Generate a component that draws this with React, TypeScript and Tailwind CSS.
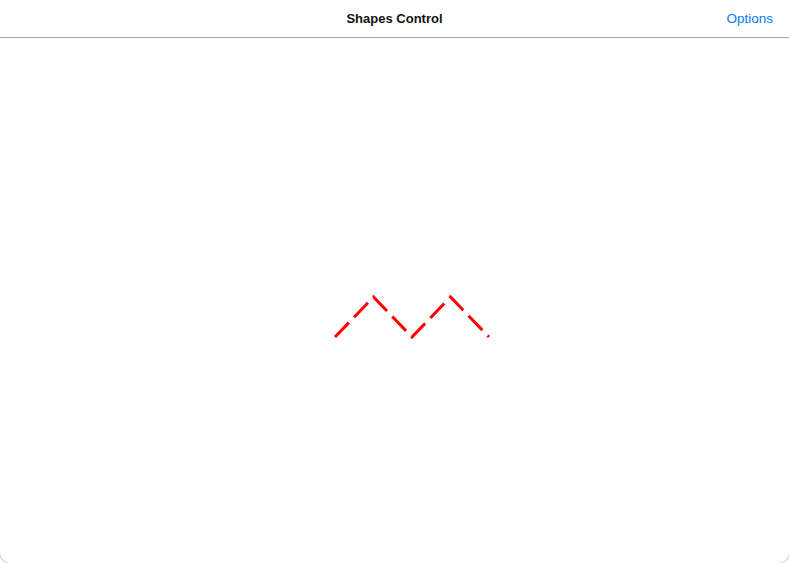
import React from "react";

export default function App() {
  return (
    <div className="w-[789px] h-[563px] overflow-hidden bg-white" style={{ fontFamily: '"Liberation Sans", Arial, sans-serif' }}>
      <div className="-ml-px w-[791px] h-[564px] flex flex-col border border-t-0 border-[#cfcfcf] rounded-b-[12px] bg-white overflow-hidden">
        <div className="relative h-[38px] shrink-0 flex items-center justify-center border-b border-[#a8a8a8] bg-white">
          <span className="text-[13px] font-bold text-[#111] leading-none">Shapes Control</span>
          <span className="absolute right-[16px] top-1/2 -translate-y-1/2 text-[13.5px] text-[#0a7aff] leading-none">Options</span>
        </div>
        <div className="flex-1 relative">
          <svg width="789" height="525" viewBox="0 0 789 525" className="block ml-px">
            <polyline
              points="334,299 372.5,259 411,299 449.5,259 488,299"
              fill="none"
              stroke="#ff0000"
              strokeWidth="3"
              strokeDasharray="20 7.5"
              strokeLinecap="butt"
              strokeLinejoin="miter"
            />
          </svg>
        </div>
      </div>
    </div>
  );
}
